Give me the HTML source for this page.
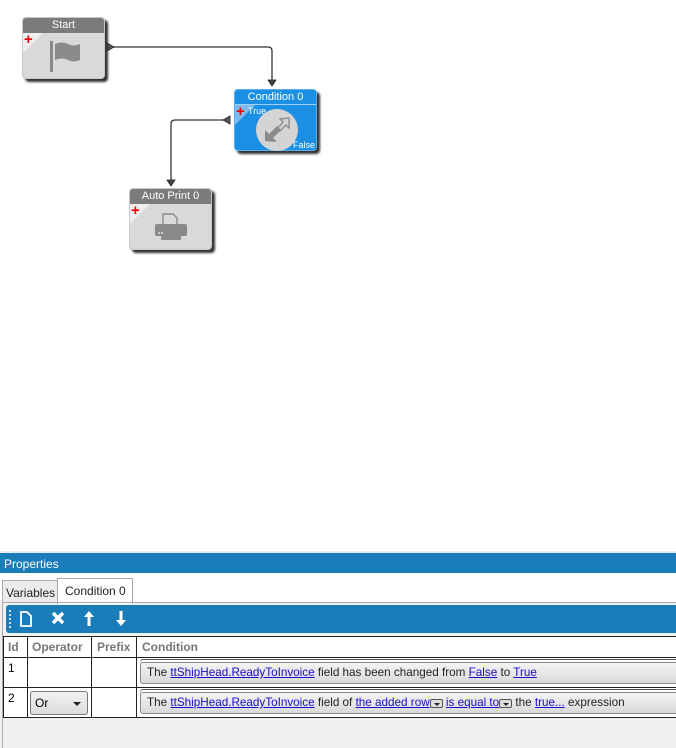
<!DOCTYPE html>
<html><head><style>
*{margin:0;padding:0;box-sizing:border-box}
body{width:676px;height:748px;background:#fff;position:relative;overflow:hidden;font-family:"Liberation Sans",sans-serif;font-size:12px}
.node{position:absolute;width:83px;height:62px;border-radius:4px;background:#d9d9d9;box-shadow:3px 3px 2px #333;border:1px solid #c8c8c8}
.node .h{height:15px;background:#7b7b7b;color:#fff;font-size:11px;text-align:center;line-height:15px;border-radius:3px 3px 0 0}
.plus{position:absolute;left:1px;top:16px;color:#e00;font-weight:bold;font-size:15px;line-height:12px}
.tri{position:absolute;left:0;top:15px;width:0;height:0;border-top:20px solid #eee;border-right:20px solid transparent}
.abs{position:absolute}
a{color:#1a0dcc;text-decoration:underline}
.dd{display:inline-block;width:13px;height:9px;border:1px solid #555;border-radius:2px;background:#ddd;vertical-align:-2px;position:relative}
.dd:after{content:"";position:absolute;left:3px;top:3px;border-left:3px solid transparent;border-right:3px solid transparent;border-top:3px solid #222}
.cbox{position:absolute;left:140px;right:-4px;height:22px;border:1px solid #888;border-radius:3px;background:linear-gradient(#f4f4f4,#d9d9d9);font-size:11.7px;line-height:20px;padding-left:6px;color:#222;box-shadow:0 -2px 0 #fff,0 -3px 0 #555}
</style></head><body>

<svg class="abs" style="left:0;top:0" width="676" height="260">
<path d="M107 47 H268 Q272 47 272 51 V80" fill="none" stroke="#333" stroke-width="1.3"/>
<polygon points="107,43 107,51 114,47" fill="#555" stroke="#222" stroke-width="0.8"/>
<polygon points="268,80 276,80 272,86" fill="#444" stroke="#222" stroke-width="0.8"/>
<path d="M224 120 H175 Q171 120 171 124 V180" fill="none" stroke="#333" stroke-width="1.3"/>
<polygon points="230,116 230,124 223,120" fill="#555" stroke="#222" stroke-width="0.8"/>
<polygon points="167,180 175,180 171,186" fill="#444" stroke="#222" stroke-width="0.8"/>
</svg>

<div class="node" style="left:22px;top:17px"><div class="h">Start</div><div class="tri"></div><div class="plus">+</div>
<svg class="abs" style="left:25px;top:22px" width="34" height="34"><rect x="2" y="1" width="3" height="31" fill="#8a8a8a"/><path d="M7 4 Q14 1 20 4 Q26 7 32 4 V20 Q26 23 20 20 Q14 17 7 20 Z" fill="#8a8a8a"/></svg></div>

<div class="node" style="left:234px;top:89px;background:#1a8fe3;border-color:#5aaff0"><div class="h" style="background:#1a8fe3;border-bottom:1px solid #9ccff5">Condition 0</div><div class="tri" style="border-top-color:#7bbbee"></div><div class="plus">+</div>
<div class="abs" style="left:13px;top:16px;color:#fff;font-size:9px">True</div>
<div class="abs" style="right:1px;bottom:0px;color:#fff;font-size:9px">False</div>
<svg class="abs" style="left:20px;top:18px" width="44" height="44"><circle cx="22" cy="22" r="21" fill="#d4d4d4"/><path d="M10 33 L10 22 L14 26 L22 18 L26 22 L18 30 L22 34 Z" fill="#8a8a8a"/><path d="M34 10 L34 20 L31 17 L25 23 L22 21 L28 14 L25 11 Z" fill="none" stroke="#8a8a8a" stroke-width="1.3"/></svg></div>

<div class="node" style="left:129px;top:188px"><div class="h">Auto Print 0</div><div class="tri"></div><div class="plus">+</div>
<svg class="abs" style="left:24px;top:24px" width="36" height="30"><path d="M9 1 H19 L23 5 V12 H9 Z" fill="none" stroke="#8a8a8a" stroke-width="1.4"/><rect x="1" y="11" width="32" height="12" rx="2" fill="#8a8a8a"/><rect x="7" y="23" width="20" height="4" fill="#8a8a8a"/><circle cx="5" cy="20" r="1" fill="#ddd"/><circle cx="8" cy="20" r="1" fill="#ddd"/></svg></div>

<div class="abs" style="left:0;top:551px;width:676px;height:2px;background:#e6eef5"></div>
<div class="abs" style="left:0;top:553px;width:676px;height:20px;background:#1a7cb9;color:#fff;font-size:12px;line-height:22px;padding-left:4px">Properties</div>
<div class="abs" style="left:0;top:573px;width:676px;height:175px;background:#f0f0f0"></div>
<div class="abs" style="left:0;top:573px;width:676px;height:30px;background:#fff"></div>
<div class="abs" style="left:2px;top:580px;width:56px;height:23px;background:#ececec;border:1px solid #aaa;border-bottom:none;font-size:12px;line-height:24px;padding-left:3px;color:#222">Variables</div>
<div class="abs" style="left:57px;top:578px;width:76px;height:26px;background:#fff;border:1px solid #aaa;border-bottom:none;font-size:12px;line-height:24px;padding-left:7px;color:#222">Condition 0</div>
<div class="abs" style="left:2px;top:602px;width:674px;height:1px;background:#aaa"></div>
<div class="abs" style="left:2px;top:603px;width:1px;height:145px;background:#aaa"></div>

<div class="abs" style="left:6px;top:605px;width:670px;height:28px;background:#1a7cb9;border-radius:3px 0 0 3px"></div>
<div class="abs" style="left:9px;top:610px;width:2px;height:18px;border-left:2px dotted #cfe3f1"></div>
<svg class="abs" style="left:18px;top:609px" width="120" height="20">
<path d="M3 3 H9 L13 7 V17 H3 Z" fill="none" stroke="#fff" stroke-width="1.8"/>
<path d="M35 4 L45 14 M45 4 L35 14" stroke="#fff" stroke-width="3.5"/>
<path d="M71 2 L66 8 H69.5 V17 H72.5 V8 H76 Z" fill="#fff"/>
<path d="M103 17 L98 11 H101.5 V2 H104.5 V11 H108 Z" fill="#fff"/>
</svg>

<div class="abs" style="left:3px;top:636px;width:673px;height:82px;background:#fff;border-top:1px solid #222;border-left:1px solid #222;border-bottom:1px solid #222"></div>
<div class="abs" style="left:3px;top:636px;width:673px;height:22px;border-bottom:1px solid #222;color:#777;font-weight:bold;font-size:12px;line-height:22px">
<span class="abs" style="left:5px">Id</span><span class="abs" style="left:29px">Operator</span><span class="abs" style="left:94px">Prefix</span><span class="abs" style="left:139px">Condition</span></div>
<div class="abs" style="left:3px;top:687px;width:673px;height:1px;background:#222"></div>
<div class="abs" style="left:27px;top:636px;width:1px;height:82px;background:#222"></div>
<div class="abs" style="left:91px;top:636px;width:1px;height:82px;background:#222"></div>
<div class="abs" style="left:136px;top:636px;width:1px;height:82px;background:#222"></div>
<div class="abs" style="left:8px;top:661px;font-size:12px">1</div>
<div class="abs" style="left:8px;top:691px;font-size:12px">2</div>
<div class="abs" style="left:30px;top:691px;width:58px;height:24px;border:1px solid #777;border-radius:3px;background:linear-gradient(#f2f2f2,#dcdcdc);font-size:12px;line-height:22px;padding-left:4px">Or<span class="abs" style="right:6px;top:10px;border-left:4px solid transparent;border-right:4px solid transparent;border-top:4px solid #222"></span></div>
<div class="cbox" style="top:662px">The <a>ttShipHead.ReadyToInvoice</a> field has been changed from <a>False</a> to <a>True</a></div>
<div class="cbox" style="top:692px">The <a>ttShipHead.ReadyToInvoice</a> field of <a>the added row</a><span class="dd"></span> <a>is equal to</a><span class="dd"></span> the <a>true...</a> expression</div>
</body></html>
